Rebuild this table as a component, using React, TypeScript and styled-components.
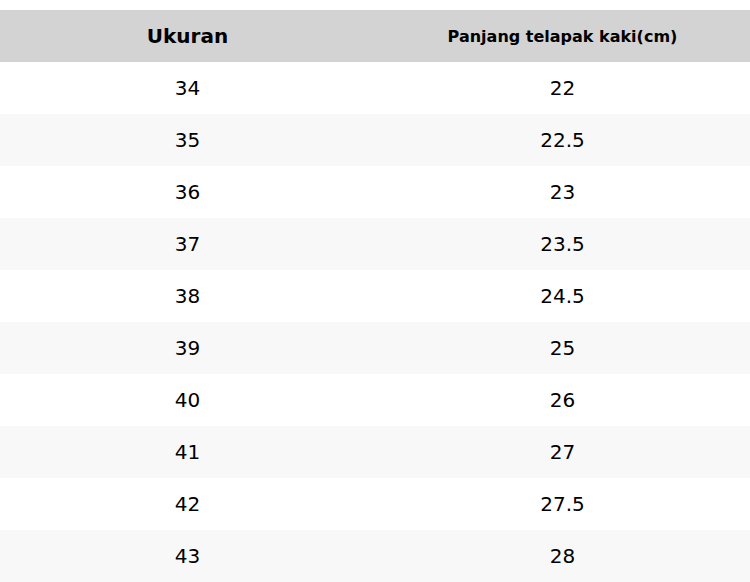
import { FunctionComponent as FC } from 'react';
import styled, { createGlobalStyle } from 'styled-components';

const GlobalStyle = createGlobalStyle`
  html, body {
    margin: 0;
    padding: 0;
    background: #ffffff;
    font-family: 'DejaVu Sans', sans-serif;
    color: #000000;
  }
`;

const rows: [string, string][] = [
  ['34', '22'],
  ['35', '22.5'],
  ['36', '23'],
  ['37', '23.5'],
  ['38', '24.5'],
  ['39', '25'],
  ['40', '26'],
  ['41', '27'],
  ['42', '27.5'],
  ['43', '28'],
];

const Page = styled.div`
  padding-top: 10px;
`;

const SizeTable = styled.table`
  width: 100%;
  border-collapse: collapse;
  table-layout: fixed;
`;

const HeadCell = styled.th<{ $small?: boolean }>`
  height: 52px;
  padding: 0;
  background: #d3d3d3;
  font-weight: bold;
  font-size: ${p => (p.$small ? '16px' : '20px')};
  text-align: center;
  vertical-align: middle;
`;

const Row = styled.tr<{ $striped: boolean }>`
  background: ${p => (p.$striped ? '#f8f8f8' : '#ffffff')};
`;

const Cell = styled.td`
  height: 52px;
  padding: 0;
  font-size: 20px;
  text-align: center;
  vertical-align: middle;
`;

const App: FC = () => (
  <>
    <GlobalStyle />
    <Page>
      <SizeTable>
        <thead>
          <tr>
            <HeadCell>Ukuran</HeadCell>
            <HeadCell $small>Panjang telapak kaki(cm)</HeadCell>
          </tr>
        </thead>
        <tbody>
          {rows.map(([size, length], i) => (
            <Row key={size} $striped={i % 2 === 1}>
              <Cell>{size}</Cell>
              <Cell>{length}</Cell>
            </Row>
          ))}
        </tbody>
      </SizeTable>
    </Page>
  </>
);

export default App;
